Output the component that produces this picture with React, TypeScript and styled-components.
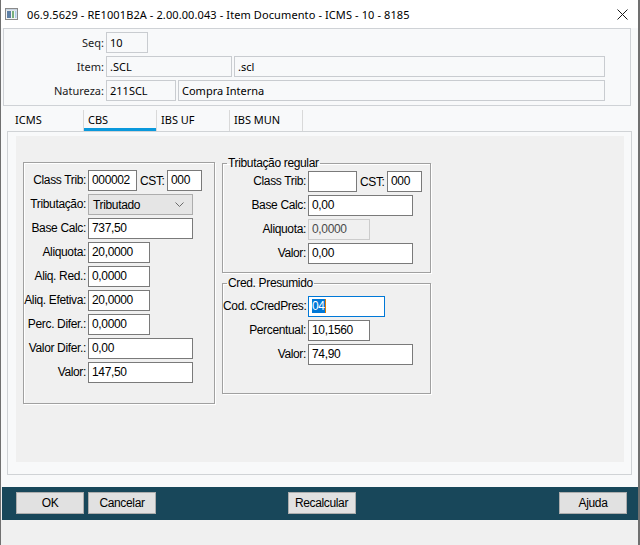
import React from 'react'
import styled, { createGlobalStyle } from 'styled-components'

const UI_FONT = `'Noto Sans', 'Open Sans', sans-serif`
const NARROW_FONT = `'Liberation Sans', Arial, sans-serif`

const GlobalStyle = createGlobalStyle`
    html, body {
        margin: 0;
        padding: 0;
    }
    body {
        width: 640px;
        height: 545px;
        overflow: hidden;
        background: #f0f0f0;
        font-family: ${UI_FONT};
    }
    * {
        box-sizing: border-box;
    }
`

const WindowStyled = styled.div`
    width: 640px;
    height: 545px;
    display: flex;
    flex-direction: column;
    border-left: 1px solid #707070;
    border-right: 2px solid #707070;
    background: #f0f0f0;
`
const TitleBarStyled = styled.div`
    height: 28px;
    flex: none;
    display: flex;
    align-items: center;
    padding: 0 10px 0 4px;
    background: #ffffff;
    font-family: ${UI_FONT};
    font-size: 11px;
    letter-spacing: 0.1px;
    color: #000;
`
const TitleTextStyled = styled.div`
    flex: 1;
    margin-left: 9px;
    white-space: nowrap;
`
const BodyStyled = styled.div`
    flex: none;
    display: flex;
    flex-direction: column;
    padding-left: 2px;
    padding-bottom: 12px;
    background: #f8f9fa;
`
const HeaderBoxStyled = styled.div`
    width: 628px;
    height: 78px;
    padding-top: 3px;
    display: flex;
    flex-direction: column;
    gap: 3px;
    border: 1px solid #cfd2d6;
`
const HeaderRowStyled = styled.div`
    display: flex;
    align-items: center;
    gap: 2px;
`
const HeaderLabelStyled = styled.div`
    width: 100px;
    text-align: right;
    font-size: 11px;
    color: #1a1a1a;
`
const HeaderFieldStyled = styled.div<{ $w: number }>`
    width: ${(p) => p.$w}px;
    height: 21px;
    padding-left: 3px;
    line-height: 19px;
    font-size: 11px;
    color: #000;
    background: #f8f9fa;
    border: 1px solid #c9ccd0;
    white-space: nowrap;
`
const TabBarStyled = styled.div`
    height: 25px;
    display: flex;
    align-items: flex-end;
    padding-left: 8px;
`
const TabStyled = styled.div<{ $active?: boolean }>`
    width: 73px;
    height: 21px;
    padding-left: 4px;
    line-height: 20px;
    font-size: 11px;
    color: #000;
    border-right: 1px solid #d9d9d9;
    box-shadow: ${(p) => (p.$active ? 'inset 0 -3px 0 #0a99dc' : 'none')};
`
const ContentPanelStyled = styled.div`
    margin-left: 4px;
    width: 625px;
    height: 344px;
    padding: 4px 0 0 8px;
    border: 1px solid #d0d3d6;
`
const GrayPanelStyled = styled.div`
    width: 608px;
    height: 326px;
    padding: 20px 0 0 7px;
    display: flex;
    align-items: flex-start;
    gap: 7px;
    background: #f0f0f0;
`
const LeftGroupStyled = styled.div`
    margin-top: 6px;
    width: 192px;
    padding: 7px 0 20px 0;
    display: grid;
    grid-template-columns: 62px auto;
    grid-auto-rows: 21px;
    column-gap: 2px;
    row-gap: 3px;
    border: 1px solid #a0a0a0;
    box-shadow: inset 1px 1px 0 #ffffff, 1px 1px 0 #ffffff;
`
const RightColumnStyled = styled.div`
    display: flex;
    flex-direction: column;
    gap: 3px;
`
const GroupStyled = styled.fieldset<{ $pt: number; $pb: number }>`
    width: 209px;
    margin: 0;
    padding: ${(p) => p.$pt}px 0 ${(p) => p.$pb}px 0;
    min-width: 0;
    border: 1px solid #a0a0a0;
    box-shadow: inset 1px 1px 0 #ffffff, 1px 1px 0 #ffffff;
`
const LegendStyled = styled.legend`
    margin-left: 4px;
    padding: 0 1px;
    line-height: 14px;
    font-family: ${NARROW_FONT};
    font-size: 12px;
    letter-spacing: -0.35px;
    color: #000;
`
const GroupGridStyled = styled.div`
    display: grid;
    grid-template-columns: 83px auto;
    grid-auto-rows: 21px;
    column-gap: 2px;
    row-gap: 3px;
`
const LabelStyled = styled.div`
    text-align: right;
    line-height: 21px;
    font-family: ${NARROW_FONT};
    font-size: 12px;
    letter-spacing: -0.35px;
    color: #000;
    white-space: nowrap;
`
const InlineRowStyled = styled.div`
    display: flex;
    align-items: center;
`
const CstLabelStyled = styled.div`
    width: 30px;
    padding-left: 3px;
    font-family: ${NARROW_FONT};
    font-size: 12px;
    letter-spacing: -0.35px;
    color: #000;
`
const FieldStyled = styled.div<{ $w: number; $disabled?: boolean; $focused?: boolean }>`
    width: ${(p) => p.$w}px;
    height: 21px;
    padding-left: 3px;
    line-height: 19px;
    font-family: ${NARROW_FONT};
    font-size: 12px;
    letter-spacing: -0.35px;
    white-space: nowrap;
    overflow: hidden;
    color: ${(p) => (p.$disabled ? '#4a4a4a' : '#000')};
    background: ${(p) => (p.$disabled ? '#f0f0f0' : '#ffffff')};
    border: 1px solid ${(p) => (p.$focused ? '#0078d7' : p.$disabled ? '#cccccc' : '#7a7a7a')};
`
const SelectedTextStyled = styled.span`
    background: #0078d7;
    color: #ffffff;
    border-right: 1px solid #e07b00;
`
const SelectStyled = styled.div`
    width: 105px;
    height: 21px;
    padding: 0 8px 0 4px;
    display: flex;
    align-items: center;
    justify-content: space-between;
    font-family: ${NARROW_FONT};
    font-size: 12px;
    letter-spacing: -0.35px;
    color: #000;
    background: #e5e5e5;
    border: 1px solid #adadad;
`
const ButtonBarStyled = styled.div`
    flex: none;
    margin-left: 1px;
    width: 636px;
    height: 33px;
    padding: 5px 11px 0 14px;
    display: grid;
    grid-template-columns: 1fr auto 1fr;
    align-items: start;
    background: #18475a;
`
const ButtonGroupStyled = styled.div<{ $end?: boolean }>`
    display: flex;
    gap: 4px;
    justify-content: ${(p) => (p.$end ? 'flex-end' : 'flex-start')};
`
const ButtonStyled = styled.button`
    width: 68px;
    height: 22px;
    padding: 0;
    font-family: ${NARROW_FONT};
    font-size: 12px;
    letter-spacing: -0.35px;
    color: #000;
    background: #e1e1e1;
    border: 1px solid #adadad;
    border-radius: 0;
`
const BottomFillerStyled = styled.div`
    flex: 1;
    background: #f0f0f0;
`

const AppIcon = () => (
    <svg width="13" height="12" viewBox="0 0 13 12">
        <rect x="0.5" y="0.5" width="12" height="11" fill="#f4f4f4" stroke="#8a8a8a" />
        <rect x="2" y="3" width="4" height="7" fill="#5d7fa6" />
        <rect x="7" y="3" width="2" height="7" fill="#7ab07a" />
        <rect x="10" y="3" width="1.5" height="7" fill="#a9c9e8" />
        <rect x="1" y="1" width="11" height="1.5" fill="#c7d3df" />
    </svg>
)

const CloseIcon = () => (
    <svg width="11" height="11" viewBox="0 0 11 11">
        <path d="M0.5 0.5 L10.5 10.5 M10.5 0.5 L0.5 10.5" stroke="#1a1a1a" strokeWidth="1" fill="none" />
    </svg>
)

const Chevron = () => (
    <svg width="9" height="5" viewBox="0 0 9 5">
        <polyline points="0.5,0.5 4.5,4.5 8.5,0.5" stroke="#6a6a6a" strokeWidth="1" fill="none" />
    </svg>
)

const Field = ({ w, value, disabled }: { w: number; value: string; disabled?: boolean }) => (
    <FieldStyled $w={w} $disabled={disabled}>
        {value}
    </FieldStyled>
)

const leftRows: { label: string; w: number; value: string }[] = [
    { label: 'Base Calc:', w: 105, value: '737,50' },
    { label: 'Aliquota:', w: 62, value: '20,0000' },
    { label: 'Aliq. Red.:', w: 62, value: '0,0000' },
    { label: 'Aliq. Efetiva:', w: 62, value: '20,0000' },
    { label: 'Perc. Difer.:', w: 62, value: '0,0000' },
    { label: 'Valor Difer.:', w: 105, value: '0,00' },
    { label: 'Valor:', w: 105, value: '147,50' },
]

const tabs = ['ICMS', 'CBS', 'IBS UF', 'IBS MUN']

const App = () => {
    return (
        <WindowStyled>
            <GlobalStyle />
            <TitleBarStyled>
                <AppIcon />
                <TitleTextStyled>06.9.5629 - RE1001B2A - 2.00.00.043 - Item Documento - ICMS - 10 - 8185</TitleTextStyled>
                <CloseIcon />
            </TitleBarStyled>

            <BodyStyled>
                <HeaderBoxStyled>
                    <HeaderRowStyled>
                        <HeaderLabelStyled>Seq:</HeaderLabelStyled>
                        <HeaderFieldStyled $w={42}>10</HeaderFieldStyled>
                    </HeaderRowStyled>
                    <HeaderRowStyled>
                        <HeaderLabelStyled>Item:</HeaderLabelStyled>
                        <HeaderFieldStyled $w={126}>.SCL</HeaderFieldStyled>
                        <HeaderFieldStyled $w={371}>.scl</HeaderFieldStyled>
                    </HeaderRowStyled>
                    <HeaderRowStyled>
                        <HeaderLabelStyled>Natureza:</HeaderLabelStyled>
                        <HeaderFieldStyled $w={70}>211SCL</HeaderFieldStyled>
                        <HeaderFieldStyled $w={427}>Compra Interna</HeaderFieldStyled>
                    </HeaderRowStyled>
                </HeaderBoxStyled>

                <TabBarStyled>
                    {tabs.map((t) => (
                        <TabStyled key={t} $active={t === 'CBS'}>
                            {t}
                        </TabStyled>
                    ))}
                </TabBarStyled>

                <ContentPanelStyled>
                    <GrayPanelStyled>
                        <LeftGroupStyled>
                            <LabelStyled>Class Trib:</LabelStyled>
                            <InlineRowStyled>
                                <Field w={49} value="000002" />
                                <CstLabelStyled>CST:</CstLabelStyled>
                                <Field w={35} value="000" />
                            </InlineRowStyled>
                            <LabelStyled>Tributação:</LabelStyled>
                            <SelectStyled>
                                <span>Tributado</span>
                                <Chevron />
                            </SelectStyled>
                            {leftRows.map((r) => (
                                <React.Fragment key={r.label}>
                                    <LabelStyled>{r.label}</LabelStyled>
                                    <Field w={r.w} value={r.value} />
                                </React.Fragment>
                            ))}
                        </LeftGroupStyled>

                        <RightColumnStyled>
                            <GroupStyled $pt={1} $pb={8}>
                                <LegendStyled>Tributação regular</LegendStyled>
                                <GroupGridStyled>
                                    <LabelStyled>Class Trib:</LabelStyled>
                                    <InlineRowStyled>
                                        <Field w={49} value="" />
                                        <CstLabelStyled>CST:</CstLabelStyled>
                                        <Field w={35} value="000" />
                                    </InlineRowStyled>
                                    <LabelStyled>Base Calc:</LabelStyled>
                                    <Field w={105} value="0,00" />
                                    <LabelStyled>Aliquota:</LabelStyled>
                                    <Field w={62} value="0,0000" disabled />
                                    <LabelStyled>Valor:</LabelStyled>
                                    <Field w={105} value="0,00" />
                                </GroupGridStyled>
                            </GroupStyled>

                            <GroupStyled $pt={6} $pb={28}>
                                <LegendStyled>Cred. Presumido</LegendStyled>
                                <GroupGridStyled>
                                    <LabelStyled>Cod. cCredPres:</LabelStyled>
                                    <FieldStyled $w={77} $focused>
                                        <SelectedTextStyled>04</SelectedTextStyled>
                                    </FieldStyled>
                                    <LabelStyled>Percentual:</LabelStyled>
                                    <Field w={62} value="10,1560" />
                                    <LabelStyled>Valor:</LabelStyled>
                                    <Field w={105} value="74,90" />
                                </GroupGridStyled>
                            </GroupStyled>
                        </RightColumnStyled>
                    </GrayPanelStyled>
                </ContentPanelStyled>
            </BodyStyled>

            <ButtonBarStyled>
                <ButtonGroupStyled>
                    <ButtonStyled>OK</ButtonStyled>
                    <ButtonStyled>Cancelar</ButtonStyled>
                </ButtonGroupStyled>
                <ButtonStyled>Recalcular</ButtonStyled>
                <ButtonGroupStyled $end>
                    <ButtonStyled>Ajuda</ButtonStyled>
                </ButtonGroupStyled>
            </ButtonBarStyled>
            <BottomFillerStyled />
        </WindowStyled>
    )
}

export default App
